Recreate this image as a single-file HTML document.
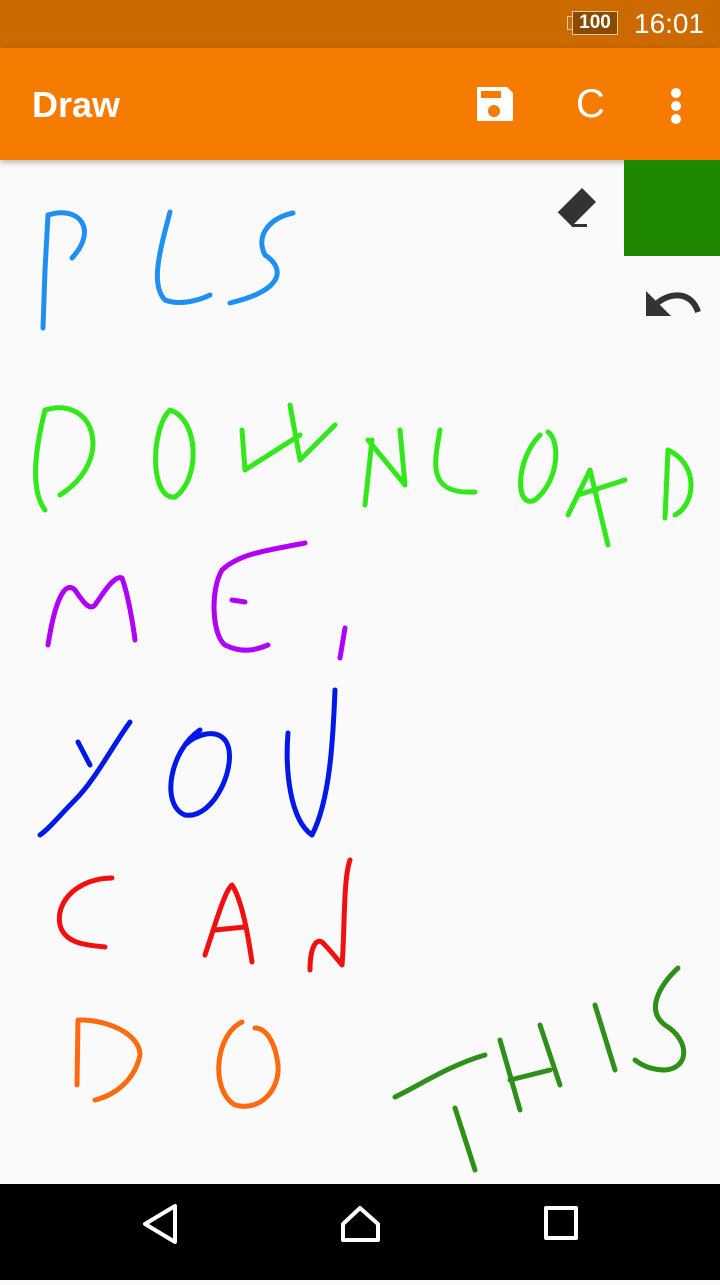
<!DOCTYPE html>
<html><head><meta charset="utf-8"><style>
body{margin:0;width:720px;height:1280px;position:relative;background:#fafafa;font-family:"Liberation Sans",sans-serif;overflow:hidden}
.sb{position:absolute;top:0;left:0;width:720px;height:48px;background:#cc6a00}
.ab{position:absolute;top:48px;left:0;width:720px;height:112px;background:#f57c00;box-shadow:0 2px 6px rgba(0,0,0,.3)}
.nav{position:absolute;bottom:0;left:0;width:720px;height:96px;background:#000}
</style></head><body>
<div class="sb">
<div style="position:absolute;left:572px;top:11px;width:46px;height:24px;border:1px solid #e8c9a0;box-sizing:border-box;background:#8a4a00"></div>
<div style="position:absolute;left:567px;top:16px;width:6px;height:14px;border:1px solid #e8c9a0;border-right:none;box-sizing:border-box"></div>
<div style="position:absolute;left:573px;top:11px;width:44px;text-align:center;color:#fff;font-size:19px;font-weight:bold;line-height:24px">100</div>
<div style="position:absolute;left:634px;top:8px;color:#fff;font-size:28px">16:01</div>
</div>
<div class="ab">
<div style="position:absolute;left:32px;top:36px;color:#fff;font-size:36px;font-weight:bold">Draw</div>
<svg style="position:absolute;left:476px;top:38px" width="38" height="36" viewBox="0 0 38 36"><path d="M1 1h30l6 6v27a1 1 0 0 1-1 1H2a1 1 0 0 1-1-1z" fill="#fff"/><rect x="5" y="5" width="20" height="7" fill="#f57c00"/><circle cx="18" cy="25" r="6" fill="#f57c00"/></svg>
<div style="position:absolute;left:576px;top:34px;color:#fff;font-size:40px">C</div>
<div style="position:absolute;left:671px;top:40px;width:10px">
<div style="width:10px;height:10px;border-radius:5px;background:#fff;margin-bottom:3px"></div>
<div style="width:10px;height:10px;border-radius:5px;background:#fff;margin-bottom:3px"></div>
<div style="width:10px;height:10px;border-radius:5px;background:#fff"></div></div>
</div>
<div style="position:absolute;left:624px;top:160px;width:96px;height:96px;background:#1e8800"></div>
<svg style="position:absolute;left:0;top:160px" width="720" height="1024" viewBox="0 160 720 1024">
<path d="M557 213 L582 188 L596 202 L571 227 Z" fill="#333"/>
<path d="M557 213 L566 222 L571 227" fill="none" stroke="#fafafa" stroke-width="2"/>
<rect x="572" y="224" width="15" height="3" fill="#333"/>
<path d="M646 291 L646 316 L671 316 Z" fill="#333"/>
<path d="M654 306 C670 290 692 292 698 312" fill="none" stroke="#333" stroke-width="6"/>
<g fill="none" stroke-width="5" stroke-linecap="round" stroke-linejoin="round">
<g stroke="#2090f0"><polyline points="48,215 45,270 43,328"/><path d="M48 215 C80 205 98 230 72 258"/><path d="M170 212 C160 250 150 285 165 300 C180 306 200 300 210 295"/><path d="M293 213 C270 218 255 235 265 255 C285 268 285 290 230 303"/></g>
<g stroke="#33e81a"><path d="M45 410 C35 450 30 490 45 510"/><path d="M45 410 C95 395 115 460 60 495"/><path d="M170 410 C150 430 150 500 175 497 C200 480 200 420 170 410"/><path d="M242 430 L245 470 L300 435"/><path d="M290 405 L300 460 L335 425"/><path d="M372 440 L365 505"/><path d="M368 440 L405 485 L400 430"/><path d="M440 430 C435 460 425 495 475 492"/><path d="M540 435 C515 460 515 510 535 500 C560 480 560 440 548 432"/><path d="M568 515 L590 470 L608 545"/><path d="M578 495 L625 480"/><path d="M668 450 L665 518"/><path d="M668 450 C700 465 695 505 675 515"/></g>
<g stroke="#b000f5"><path d="M48 645 C55 600 65 580 75 590 C85 605 90 610 95 605 C105 590 115 575 122 578 C130 600 135 640 135 640"/><path d="M305 543 C270 550 240 553 222 570 C210 590 212 635 225 645 C245 655 260 648 268 645"/><path d="M232 600 L245 602"/><path d="M345 628 L340 658"/></g>
<g stroke="#0018e8"><path d="M78 742 L90 765"/><path d="M130 722 C110 750 95 780 75 800 C60 815 50 828 40 835"/><path d="M200 730 C170 750 160 805 185 815 C215 820 240 760 225 740 C215 728 195 735 185 745"/><path d="M288 733 C285 770 290 820 312 835 C330 800 333 740 335 690"/></g>
<g stroke="#f01010"><path d="M112 878 C80 878 55 900 60 925 C65 945 90 945 105 947"/><path d="M205 955 C215 925 225 890 232 885 C242 900 248 935 252 962"/><path d="M215 930 L245 927"/><path d="M310 970 C310 950 315 938 322 942 C330 950 338 960 342 965 C345 930 343 880 350 860"/></g>
<g stroke="#ff6a10"><path d="M78 1020 L77 1085"/><path d="M80 1020 C110 1020 140 1035 140 1055 C135 1080 115 1095 95 1100"/><path d="M242 1022 C215 1035 210 1090 235 1105 C260 1112 280 1090 278 1065 C275 1040 265 1028 255 1028"/></g>
<g stroke="#2e9018"><path d="M395 1097 C420 1085 450 1065 485 1055"/><path d="M455 1108 L475 1170"/><path d="M500 1040 L520 1110"/><path d="M540 1025 L560 1085"/><path d="M510 1080 L550 1070"/><path d="M595 1005 L615 1070"/><path d="M678 968 C660 985 645 1010 665 1025 C690 1040 690 1068 665 1070 C650 1070 640 1064 635 1060"/></g>
</g></svg>
<div class="nav">
<svg width="720" height="96"><g fill="none" stroke="#fff" stroke-width="4" stroke-linejoin="round"><path d="M175 22 L145 40 L175 58 Z"/><path d="M343 40 L360 24 L378 40 V56 H343 Z"/><rect x="546" y="24" width="30" height="30"/></g></svg>
</div>
</body></html>
